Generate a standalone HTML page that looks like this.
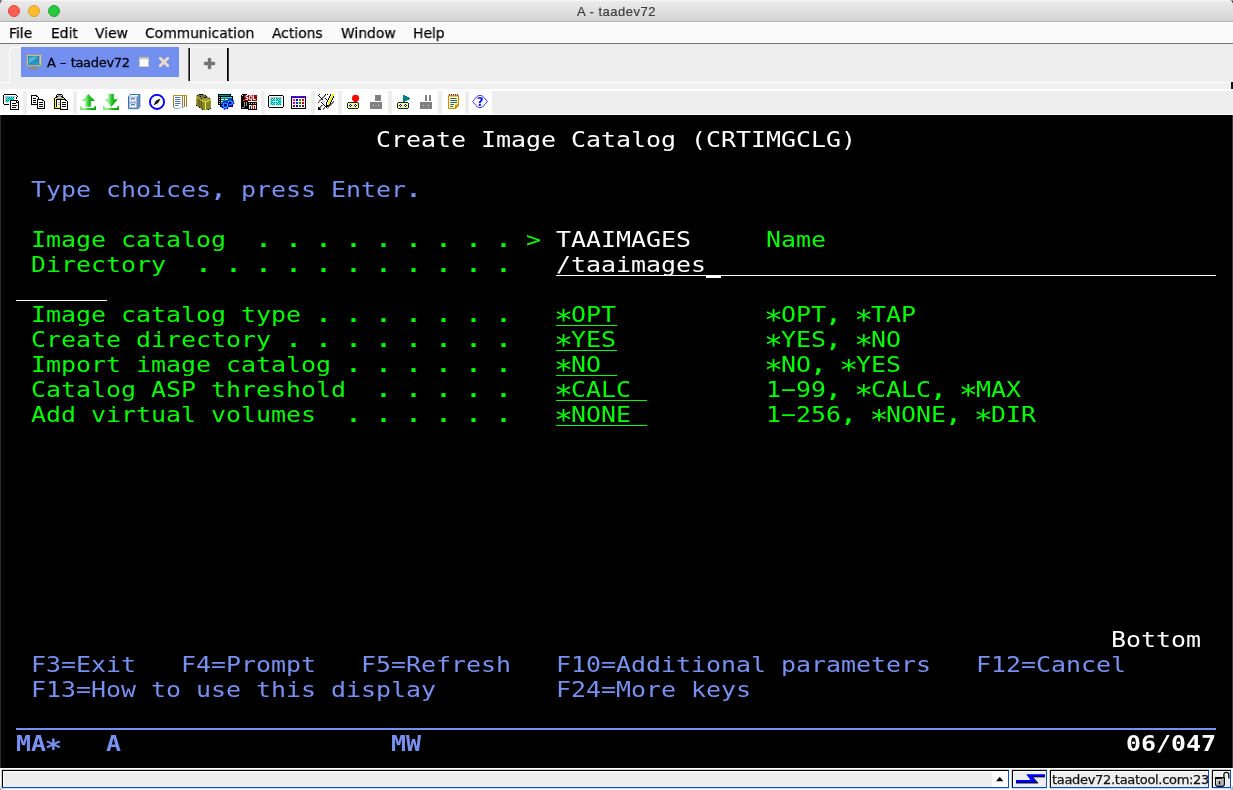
<!DOCTYPE html>
<html>
<head>
<meta charset="utf-8">
<title>A - taadev72</title>
<style>
html,body{margin:0;padding:0;}
body{width:1233px;height:790px;overflow:hidden;background:#fff;position:relative;font-family:"Liberation Sans","DejaVu Sans",sans-serif;}
.abs{position:absolute;}
.ic{position:absolute;display:block;}
#titlebar{left:0;top:0;width:1233px;height:21px;background:linear-gradient(#ececec,#d4d4d4);border-bottom:1px solid #b4b4b4;}
#titlebar .t{position:absolute;left:0;width:1233px;top:4px;text-align:center;font-size:13px;line-height:16px;color:#3c3c3c;letter-spacing:0.5px;-webkit-text-stroke:0.2px #3c3c3c;will-change:transform;}
.tl{position:absolute;top:5px;width:12px;height:12px;border-radius:50%;box-sizing:border-box;}
#menubar{left:0;top:22px;width:1233px;height:21px;background:#fafafa;border-bottom:1px solid #747474;}
#menubar span{position:absolute;top:1.6px;font-size:14.8px;line-height:18px;color:#000;-webkit-text-stroke:0.25px #000;will-change:transform;transform-origin:0 0;transform:scaleX(0.937);font-family:"DejaVu Sans","Liberation Sans",sans-serif;white-space:pre;}
#tabarea{left:0;top:44px;width:1233px;height:71px;background:#eeeeee;}
#term{left:0;top:115px;width:1233px;height:653px;background:#000;}
.row{position:absolute;left:16px;height:25px;line-height:25px;font-family:"DejaVu Sans Mono","Liberation Mono",monospace;font-size:21.5px;white-space:pre;transform-origin:0 0;transform:scaleX(1.15883);will-change:transform;}
.oia{font-weight:bold}
.row b{font-weight:bold}
.row .as{display:inline-block;font-weight:normal;transform:scale(1.27);transform-origin:50% 51.6%}
.oia .as{font-weight:bold;transform:scale(1.15)}
.g{color:#00ff00}.b{color:#7890f0}.w{color:#ffffff}
.ul{position:absolute;height:1px;}
#status{left:0;top:768px;width:1233px;height:22px;background:#fff;}
.sbox{position:absolute;top:2px;height:18px;box-sizing:border-box;background:#eeeeee;border-top:1px solid #000;border-left:1px solid #000;border-bottom:1px solid #0c4cdc;border-right:1px solid #0c4cdc;box-shadow:inset 1px 1px 0 #fff,0 -1px 0 rgba(0,0,0,0.2),-1px 0 0 rgba(0,0,0,0.2),0 1px 0 rgba(12,76,220,0.2);}
</style>
</head>
<body>
<!-- title bar -->
<div id="titlebar" class="abs">
  <div class="tl" style="left:8px;background:#fe5f57;border:0.5px solid #e2463f;"></div>
  <div class="tl" style="left:28px;background:#febc2e;border:0.5px solid #e0a028;"></div>
  <div class="tl" style="left:48px;background:#28c840;border:0.5px solid #1fa92f;"></div>
  <div class="t">A - taadev72</div>
</div>
<!-- menu bar -->
<div id="menubar" class="abs">
  <span style="left:9px">File</span>
  <span style="left:51px">Edit</span>
  <span style="left:95px">View</span>
  <span style="left:145px">Communication</span>
  <span style="left:272px">Actions</span>
  <span style="left:341px">Window</span>
  <span style="left:413px">Help</span>
</div>
<!-- tab area + toolbar -->
<div id="tabarea" class="abs">
<div class="abs" style="left:0;top:38px;width:10px;height:1px;background:#fff"></div>
<div class="abs" style="left:9px;top:3px;width:13px;height:36px;border-left:1px solid #fff;border-top:1px solid #fff;border-top-left-radius:4px;box-sizing:border-box"></div>
<div class="abs" style="left:190px;top:38px;width:1043px;height:1px;background:#fff"></div>
<div class="abs" style="left:1px;top:39px;width:1232px;height:6px;background:#f0f0f0"></div>
<div class="abs" style="left:1231px;top:38px;width:2px;height:7px;background:#111"></div>
<div class="abs" style="left:21px;top:3px;width:158px;height:30px;background:#7390f0"></div>
<div class="abs" style="left:188px;top:4px;width:2px;height:33px;background:linear-gradient(90deg,#666 50%,#111 50%)"></div>
<div class="abs" style="left:190px;top:3px;width:38px;height:1px;background:#f8f8f8"></div>
<div class="abs" style="left:190px;top:4px;width:1px;height:34px;background:#fafafa"></div>
<div class="abs" style="left:227px;top:4px;width:2px;height:33px;background:linear-gradient(90deg,#000 50%,#3a3a3a 50%)"></div>
<svg class="abs" style="left:203px;top:13px" width="13" height="13" viewBox="0 0 13 13"><path d="M5 1.2h3v3.8h3.8v3h-3.8v3.8h-3v-3.8h-3.8v-3h3.8z" fill="#767676" stroke="#606060" stroke-width="0.35"/></svg>
<svg class="abs" style="left:26px;top:10px" width="16" height="16" viewBox="0 0 16 16">
<defs><linearGradient id="scr" x1="0" y1="0" x2="1" y2="1"><stop offset="0" stop-color="#2a9cc8"/><stop offset="0.45" stop-color="#58bede"/><stop offset="0.5" stop-color="#1f8fbf"/><stop offset="1" stop-color="#2aa0cc"/></linearGradient></defs>
<rect x="0.5" y="0.5" width="15" height="11.5" rx="1" fill="#c9c6ba" stroke="#9a988e" stroke-width="1"/>
<rect x="2.2" y="2.2" width="10.8" height="8.2" fill="url(#scr)" stroke="#1c6f98" stroke-width="0.6"/>
<rect x="13.2" y="10" width="1.3" height="1.3" fill="#20e020"/>
<rect x="6" y="12" width="3.2" height="2" fill="#8f8f8a"/>
<rect x="2.2" y="13.8" width="11.2" height="1.7" rx="0.8" fill="#8a8a86"/>
</svg>
<div class="abs" style="left:47px;top:10px;font-family:'DejaVu Sans','Liberation Sans',sans-serif;font-size:13px;line-height:18px;letter-spacing:-0.3px;word-spacing:0.6px;color:#000010;-webkit-text-stroke:0.3px #000010;will-change:transform;white-space:pre">A – taadev72</div>
<svg class="abs" style="left:139px;top:13px" width="10" height="10" viewBox="0 0 10 10"><rect x="0.5" y="0.5" width="9" height="9" fill="#fff" stroke="#cfc8b4" stroke-width="1"/><rect x="0" y="0" width="10" height="2.2" fill="#c9c0a8"/></svg>
<svg class="abs" style="left:159px;top:13px" width="10" height="10" viewBox="0 0 10 10"><path d="M1.2 1.2L8.8 8.8M8.8 1.2L1.2 8.8" stroke="#c9bca8" stroke-width="3.2" stroke-linecap="square"/><path d="M1.2 1.2L8.8 8.8M8.8 1.2L1.2 8.8" stroke="#eadcd8" stroke-width="2.2" stroke-linecap="square"/></svg>
<div id="toolbar" class="abs" style="left:0;top:45px;width:1233px;height:26px;background:#fff"></div>
<div class="abs" style="left:492px;top:47px;width:741px;height:23px;background:#eeeeee"></div>
<div class="abs" style="left:23px;top:47px;width:4px;height:23px;background:#eeeeee"></div>
<div class="abs" style="left:73px;top:47px;width:4px;height:23px;background:#eeeeee"></div>
<div class="abs" style="left:261px;top:47px;width:4px;height:23px;background:#eeeeee"></div>
<div class="abs" style="left:311px;top:47px;width:4px;height:23px;background:#eeeeee"></div>
<div class="abs" style="left:338px;top:47px;width:4px;height:23px;background:#eeeeee"></div>
<div class="abs" style="left:388px;top:47px;width:4px;height:23px;background:#eeeeee"></div>
<div class="abs" style="left:438px;top:47px;width:4px;height:23px;background:#eeeeee"></div>
<div class="abs" style="left:465px;top:47px;width:4px;height:23px;background:#eeeeee"></div>
<svg class="ic" style="left:3px;top:50px" width="16" height="16" viewBox="0 0 16 16" shape-rendering="crispEdges"><rect x="1" y="0" width="12" height="1" fill="#000000"/><rect x="0" y="1" width="1" height="1" fill="#000000"/><rect x="13" y="1" width="1" height="1" fill="#000000"/><rect x="0" y="2" width="1" height="1" fill="#000000"/><rect x="2" y="2" width="10" height="1" fill="#c4c0c0"/><rect x="12" y="2" width="1" height="1" fill="#e0dede"/><rect x="14" y="2" width="1" height="1" fill="#000000"/><rect x="0" y="3" width="1" height="1" fill="#000000"/><rect x="2" y="3" width="1" height="1" fill="#c4c0c0"/><rect x="3" y="3" width="1" height="1" fill="#00ffff"/><rect x="4" y="3" width="1" height="1" fill="#009494"/><rect x="5" y="3" width="1" height="1" fill="#00ffff"/><rect x="6" y="3" width="1" height="1" fill="#009494"/><rect x="7" y="3" width="1" height="1" fill="#00ffff"/><rect x="8" y="3" width="1" height="1" fill="#009494"/><rect x="9" y="3" width="1" height="1" fill="#00ffff"/><rect x="10" y="3" width="1" height="1" fill="#009494"/><rect x="11" y="3" width="1" height="1" fill="#e0dede"/><rect x="13" y="3" width="1" height="1" fill="#000000"/><rect x="0" y="4" width="1" height="1" fill="#000000"/><rect x="2" y="4" width="1" height="1" fill="#c4c0c0"/><rect x="3" y="4" width="1" height="1" fill="#009494"/><rect x="4" y="4" width="1" height="1" fill="#ffffff"/><rect x="5" y="4" width="1" height="1" fill="#009494"/><rect x="6" y="4" width="1" height="1" fill="#00ffff"/><rect x="7" y="4" width="1" height="1" fill="#009494"/><rect x="8" y="4" width="1" height="1" fill="#00ffff"/><rect x="9" y="4" width="1" height="1" fill="#009494"/><rect x="10" y="4" width="1" height="1" fill="#00ffff"/><rect x="11" y="4" width="1" height="1" fill="#e0dede"/><rect x="13" y="4" width="1" height="1" fill="#000000"/><rect x="0" y="5" width="1" height="1" fill="#000000"/><rect x="2" y="5" width="1" height="1" fill="#c4c0c0"/><rect x="3" y="5" width="1" height="1" fill="#00ffff"/><rect x="4" y="5" width="1" height="1" fill="#009494"/><rect x="5" y="5" width="1" height="1" fill="#00ffff"/><rect x="6" y="5" width="1" height="1" fill="#009494"/><rect x="7" y="5" width="1" height="1" fill="#00ffff"/><rect x="8" y="5" width="1" height="1" fill="#009494"/><rect x="9" y="5" width="1" height="1" fill="#00ffff"/><rect x="10" y="5" width="1" height="1" fill="#009494"/><rect x="11" y="5" width="1" height="1" fill="#e0dede"/><rect x="0" y="6" width="1" height="1" fill="#000000"/><rect x="2" y="6" width="1" height="1" fill="#c4c0c0"/><rect x="3" y="6" width="1" height="1" fill="#009494"/><rect x="4" y="6" width="1" height="1" fill="#00ffff"/><rect x="5" y="6" width="1" height="1" fill="#009494"/><rect x="7" y="6" width="8" height="1" fill="#000000"/><rect x="0" y="7" width="1" height="1" fill="#000000"/><rect x="2" y="7" width="1" height="1" fill="#c4c0c0"/><rect x="3" y="7" width="1" height="1" fill="#00ffff"/><rect x="4" y="7" width="1" height="1" fill="#009494"/><rect x="5" y="7" width="1" height="1" fill="#00ffff"/><rect x="7" y="7" width="1" height="1" fill="#000000"/><rect x="8" y="7" width="5" height="1" fill="#ffffff"/><rect x="13" y="7" width="1" height="1" fill="#000000"/><rect x="14" y="7" width="1" height="1" fill="#ffffff"/><rect x="15" y="7" width="1" height="1" fill="#000000"/><rect x="0" y="8" width="1" height="1" fill="#000000"/><rect x="2" y="8" width="4" height="1" fill="#e0dede"/><rect x="7" y="8" width="1" height="1" fill="#000000"/><rect x="8" y="8" width="5" height="1" fill="#ffffff"/><rect x="13" y="8" width="3" height="1" fill="#000000"/><rect x="0" y="9" width="1" height="1" fill="#000000"/><rect x="7" y="9" width="1" height="1" fill="#000000"/><rect x="8" y="9" width="1" height="1" fill="#ffffff"/><rect x="9" y="9" width="4" height="1" fill="#000000"/><rect x="13" y="9" width="2" height="1" fill="#ffffff"/><rect x="15" y="9" width="1" height="1" fill="#000000"/><rect x="1" y="10" width="5" height="1" fill="#000000"/><rect x="7" y="10" width="1" height="1" fill="#000000"/><rect x="8" y="10" width="7" height="1" fill="#ffffff"/><rect x="15" y="10" width="1" height="1" fill="#000000"/><rect x="7" y="11" width="1" height="1" fill="#000000"/><rect x="8" y="11" width="1" height="1" fill="#ffffff"/><rect x="9" y="11" width="5" height="1" fill="#000000"/><rect x="14" y="11" width="1" height="1" fill="#ffffff"/><rect x="15" y="11" width="1" height="1" fill="#000000"/><rect x="7" y="12" width="1" height="1" fill="#000000"/><rect x="8" y="12" width="7" height="1" fill="#ffffff"/><rect x="15" y="12" width="1" height="1" fill="#000000"/><rect x="7" y="13" width="1" height="1" fill="#000000"/><rect x="8" y="13" width="1" height="1" fill="#ffffff"/><rect x="9" y="13" width="4" height="1" fill="#000000"/><rect x="13" y="13" width="2" height="1" fill="#ffffff"/><rect x="15" y="13" width="1" height="1" fill="#000000"/><rect x="7" y="14" width="1" height="1" fill="#000000"/><rect x="8" y="14" width="7" height="1" fill="#ffffff"/><rect x="15" y="14" width="1" height="1" fill="#000000"/><rect x="7" y="15" width="9" height="1" fill="#000000"/></svg>
<svg class="ic" style="left:30px;top:50px" width="16" height="16" viewBox="0 0 16 16" shape-rendering="crispEdges"><rect x="1" y="1" width="6" height="1" fill="#000000"/><rect x="1" y="2" width="1" height="1" fill="#000000"/><rect x="2" y="2" width="4" height="1" fill="#ffffff"/><rect x="6" y="2" width="2" height="1" fill="#000000"/><rect x="1" y="3" width="1" height="1" fill="#000000"/><rect x="2" y="3" width="6" height="1" fill="#ffffff"/><rect x="8" y="3" width="1" height="1" fill="#000000"/><rect x="1" y="4" width="1" height="1" fill="#000000"/><rect x="2" y="4" width="1" height="1" fill="#ffffff"/><rect x="3" y="4" width="3" height="1" fill="#000000"/><rect x="6" y="4" width="2" height="1" fill="#ffffff"/><rect x="8" y="4" width="1" height="1" fill="#000000"/><rect x="1" y="5" width="1" height="1" fill="#000000"/><rect x="2" y="5" width="5" height="1" fill="#ffffff"/><rect x="7" y="5" width="6" height="1" fill="#000000"/><rect x="1" y="6" width="1" height="1" fill="#000000"/><rect x="2" y="6" width="1" height="1" fill="#ffffff"/><rect x="3" y="6" width="3" height="1" fill="#000000"/><rect x="6" y="6" width="1" height="1" fill="#ffffff"/><rect x="7" y="6" width="1" height="1" fill="#000000"/><rect x="8" y="6" width="4" height="1" fill="#ffffff"/><rect x="12" y="6" width="2" height="1" fill="#000000"/><rect x="1" y="7" width="1" height="1" fill="#000000"/><rect x="2" y="7" width="5" height="1" fill="#ffffff"/><rect x="7" y="7" width="1" height="1" fill="#000000"/><rect x="8" y="7" width="6" height="1" fill="#ffffff"/><rect x="14" y="7" width="1" height="1" fill="#000000"/><rect x="1" y="8" width="1" height="1" fill="#000000"/><rect x="2" y="8" width="1" height="1" fill="#ffffff"/><rect x="3" y="8" width="3" height="1" fill="#000000"/><rect x="6" y="8" width="1" height="1" fill="#ffffff"/><rect x="7" y="8" width="1" height="1" fill="#000000"/><rect x="8" y="8" width="1" height="1" fill="#ffffff"/><rect x="9" y="8" width="4" height="1" fill="#000000"/><rect x="13" y="8" width="1" height="1" fill="#ffffff"/><rect x="14" y="8" width="1" height="1" fill="#000000"/><rect x="1" y="9" width="1" height="1" fill="#000000"/><rect x="2" y="9" width="5" height="1" fill="#ffffff"/><rect x="7" y="9" width="1" height="1" fill="#000000"/><rect x="8" y="9" width="6" height="1" fill="#ffffff"/><rect x="14" y="9" width="1" height="1" fill="#000000"/><rect x="1" y="10" width="7" height="1" fill="#000000"/><rect x="8" y="10" width="1" height="1" fill="#ffffff"/><rect x="9" y="10" width="4" height="1" fill="#000000"/><rect x="13" y="10" width="1" height="1" fill="#ffffff"/><rect x="14" y="10" width="1" height="1" fill="#000000"/><rect x="7" y="11" width="1" height="1" fill="#000000"/><rect x="8" y="11" width="6" height="1" fill="#ffffff"/><rect x="14" y="11" width="1" height="1" fill="#000000"/><rect x="7" y="12" width="1" height="1" fill="#000000"/><rect x="8" y="12" width="1" height="1" fill="#ffffff"/><rect x="9" y="12" width="4" height="1" fill="#000000"/><rect x="13" y="12" width="1" height="1" fill="#ffffff"/><rect x="14" y="12" width="1" height="1" fill="#000000"/><rect x="7" y="13" width="1" height="1" fill="#000000"/><rect x="8" y="13" width="6" height="1" fill="#ffffff"/><rect x="14" y="13" width="1" height="1" fill="#000000"/><rect x="7" y="14" width="8" height="1" fill="#000000"/></svg>
<svg class="ic" style="left:53px;top:50px" width="16" height="16" viewBox="0 0 16 16" shape-rendering="crispEdges"><rect x="4" y="0" width="5" height="1" fill="#000000"/><rect x="3" y="1" width="1" height="1" fill="#000000"/><rect x="5" y="1" width="3" height="1" fill="#a0a0a0"/><rect x="9" y="1" width="1" height="1" fill="#000000"/><rect x="3" y="2" width="2" height="1" fill="#000000"/><rect x="5" y="2" width="3" height="1" fill="#a0a0a0"/><rect x="8" y="2" width="2" height="1" fill="#000000"/><rect x="2" y="3" width="2" height="1" fill="#000000"/><rect x="4" y="3" width="1" height="1" fill="#a0a0a0"/><rect x="5" y="3" width="3" height="1" fill="#e0dede"/><rect x="8" y="3" width="1" height="1" fill="#a0a0a0"/><rect x="9" y="3" width="2" height="1" fill="#000000"/><rect x="1" y="4" width="1" height="1" fill="#000000"/><rect x="2" y="4" width="2" height="1" fill="#ffff00"/><rect x="4" y="4" width="5" height="1" fill="#a0a0a0"/><rect x="9" y="4" width="2" height="1" fill="#ffff00"/><rect x="11" y="4" width="1" height="1" fill="#000000"/><rect x="1" y="5" width="1" height="1" fill="#000000"/><rect x="2" y="5" width="1" height="1" fill="#ffff00"/><rect x="3" y="5" width="10" height="1" fill="#000000"/><rect x="1" y="6" width="1" height="1" fill="#000000"/><rect x="2" y="6" width="1" height="1" fill="#ffff00"/><rect x="3" y="6" width="1" height="1" fill="#000000"/><rect x="4" y="6" width="3" height="1" fill="#ffffff"/><rect x="7" y="6" width="1" height="1" fill="#000000"/><rect x="8" y="6" width="4" height="1" fill="#ffffff"/><rect x="12" y="6" width="2" height="1" fill="#000000"/><rect x="1" y="7" width="1" height="1" fill="#000000"/><rect x="2" y="7" width="1" height="1" fill="#ffff00"/><rect x="3" y="7" width="1" height="1" fill="#000000"/><rect x="4" y="7" width="3" height="1" fill="#ffffff"/><rect x="7" y="7" width="1" height="1" fill="#000000"/><rect x="8" y="7" width="6" height="1" fill="#ffffff"/><rect x="14" y="7" width="1" height="1" fill="#000000"/><rect x="1" y="8" width="1" height="1" fill="#000000"/><rect x="2" y="8" width="1" height="1" fill="#ffff00"/><rect x="3" y="8" width="1" height="1" fill="#000000"/><rect x="4" y="8" width="1" height="1" fill="#ffffff"/><rect x="5" y="8" width="2" height="1" fill="#a0a0a0"/><rect x="7" y="8" width="1" height="1" fill="#000000"/><rect x="8" y="8" width="1" height="1" fill="#ffffff"/><rect x="9" y="8" width="4" height="1" fill="#000000"/><rect x="13" y="8" width="1" height="1" fill="#ffffff"/><rect x="14" y="8" width="1" height="1" fill="#000000"/><rect x="1" y="9" width="1" height="1" fill="#000000"/><rect x="2" y="9" width="1" height="1" fill="#ffff00"/><rect x="3" y="9" width="1" height="1" fill="#000000"/><rect x="4" y="9" width="3" height="1" fill="#ffffff"/><rect x="7" y="9" width="1" height="1" fill="#000000"/><rect x="8" y="9" width="6" height="1" fill="#ffffff"/><rect x="14" y="9" width="1" height="1" fill="#000000"/><rect x="1" y="10" width="1" height="1" fill="#000000"/><rect x="2" y="10" width="1" height="1" fill="#ffff00"/><rect x="3" y="10" width="1" height="1" fill="#000000"/><rect x="4" y="10" width="1" height="1" fill="#ffffff"/><rect x="5" y="10" width="2" height="1" fill="#a0a0a0"/><rect x="7" y="10" width="1" height="1" fill="#000000"/><rect x="8" y="10" width="1" height="1" fill="#ffffff"/><rect x="9" y="10" width="4" height="1" fill="#000000"/><rect x="13" y="10" width="1" height="1" fill="#ffffff"/><rect x="14" y="10" width="1" height="1" fill="#000000"/><rect x="1" y="11" width="1" height="1" fill="#000000"/><rect x="2" y="11" width="1" height="1" fill="#ffff00"/><rect x="3" y="11" width="1" height="1" fill="#000000"/><rect x="4" y="11" width="3" height="1" fill="#ffffff"/><rect x="7" y="11" width="1" height="1" fill="#000000"/><rect x="8" y="11" width="6" height="1" fill="#ffffff"/><rect x="14" y="11" width="1" height="1" fill="#000000"/><rect x="1" y="12" width="1" height="1" fill="#000000"/><rect x="2" y="12" width="1" height="1" fill="#ffff00"/><rect x="3" y="12" width="1" height="1" fill="#000000"/><rect x="4" y="12" width="3" height="1" fill="#ffffff"/><rect x="7" y="12" width="1" height="1" fill="#000000"/><rect x="8" y="12" width="1" height="1" fill="#ffffff"/><rect x="9" y="12" width="4" height="1" fill="#000000"/><rect x="13" y="12" width="1" height="1" fill="#ffffff"/><rect x="14" y="12" width="1" height="1" fill="#000000"/><rect x="1" y="13" width="1" height="1" fill="#000000"/><rect x="2" y="13" width="5" height="1" fill="#ffff00"/><rect x="7" y="13" width="1" height="1" fill="#000000"/><rect x="8" y="13" width="6" height="1" fill="#ffffff"/><rect x="14" y="13" width="1" height="1" fill="#000000"/><rect x="1" y="14" width="7" height="1" fill="#000000"/><rect x="8" y="14" width="6" height="1" fill="#ffffff"/><rect x="14" y="14" width="1" height="1" fill="#000000"/><rect x="7" y="15" width="8" height="1" fill="#000000"/></svg>
<svg class="ic" style="left:80px;top:50px" width="16" height="16" viewBox="0 0 16 16"><defs><linearGradient id="gg" x1="0" y1="0" x2="1" y2="0"><stop offset="0.05" stop-color="#7fe87f"/><stop offset="0.3" stop-color="#8ff08f"/><stop offset="0.55" stop-color="#22c022"/><stop offset="1" stop-color="#00a000"/></linearGradient></defs><path d="M8.3 0.1L15 6.9H10.9V12.8H5.2V6.9H1.8Z" fill="url(#gg)"/><path d="M0 12.3h1.7v1.7h12.6v-1.7h1.7v3.7h-16z" fill="url(#gg)"/></svg>
<svg class="ic" style="left:103px;top:50px" width="16" height="16" viewBox="0 0 16 16"><path d="M5.4 0.1H10.9V5.2H14.8L8.4 13L2 5.2H5.4Z" fill="url(#gg)"/><path d="M0 12.3h1.7v1.7h12.6v-1.7h1.7v3.7h-16z" fill="url(#gg)"/></svg>
<svg class="ic" style="left:126px;top:50px" width="16" height="16" viewBox="0 0 16 16">
<path d="M2.5 2.5L4.3 0.5H13.7V12.7L11.8 14.7H2.5Z" fill="#aeb6df" stroke="#2b78ab" stroke-width="1" stroke-linejoin="round"/>
<path d="M4.3 1H13.2L11.8 2.5H3Z" fill="#fff"/>
<path d="M11.8 2.5L13.7 0.5V12.7L11.8 14.7Z" fill="#8c98cc" stroke="#2b78ab" stroke-width="0.8"/>
<rect x="3.6" y="3.3" width="6.6" height="4.3" fill="#fff" stroke="#8fa0d8" stroke-width="0.5"/>
<rect x="3.6" y="9.2" width="6.6" height="4.3" fill="#fff" stroke="#8fa0d8" stroke-width="0.5"/>
<path d="M5.4 5.8V4.7H8.4V5.8" fill="none" stroke="#2f58c0" stroke-width="1"/>
<path d="M5.4 11.7V10.6H8.4V11.7" fill="none" stroke="#2f58c0" stroke-width="1"/>
</svg>
<svg class="ic" style="left:149px;top:50px" width="16" height="16" viewBox="0 0 16 16"><circle cx="8" cy="7.9" r="7.05" fill="#fff" stroke="#0000ff" stroke-width="1.85"/><path d="M11.5 4.6L9.2 9.1L4.6 11.2L6.8 6.7Z" fill="#000"/><circle cx="8" cy="7.9" r="0.9" fill="#333"/></svg>
<svg class="ic" style="left:172px;top:50px" width="16" height="16" viewBox="0 0 16 16">
<defs><linearGradient id="tan" x1="0" y1="0" x2="0" y2="1"><stop offset="0" stop-color="#c08820"/><stop offset="1" stop-color="#7c6a30"/></linearGradient></defs>
<path d="M1.5 12.8V1.5H14.5V12.8" fill="#fff" stroke="url(#tan)" stroke-width="1"/>
<path d="M10.5 1.5V12.5M12.5 1.5V12.8" stroke="url(#tan)" stroke-width="1" fill="none"/>
<path d="M1.5 12.5Q1.8 14 3.2 14.2" stroke="#7c6a30" stroke-width="1" fill="none"/>
<path d="M3 3.5H8.5M3 5.5H8.5M3 7.5H8.5M3 9.5H8.5M3 11.5H6.5" stroke="#4a74c0" stroke-width="1"/>
<path d="M3.2 14.5H7L9 12.5L11 14L12 12.6" stroke="#8fb0e0" stroke-width="1" fill="none"/>
</svg>
<svg class="ic" style="left:195px;top:50px" width="16" height="16" viewBox="0 0 16 16">
<path d="M1 2.2L2.2 1L4 0.3H8.2L10.5 1.2L12 2.5L14.5 4L16 5.2V14.5L15 15.5L13.5 15.9H7.5L5 14L3.5 13L1 11.6Z" fill="#84842e"/>
<path d="M2.4 1.2L4 0.6H8.2L10.4 1.4L12 2.8L13.8 4.2L11 4L7.5 4.6L5.5 3.2Z" fill="#7a7a28"/>
<ellipse cx="11" cy="5.7" rx="4.5" ry="1.7" fill="#9c9c4c"/>
<path d="M4 3V13M6.3 4.6V14.6" stroke="#4e4e12" stroke-width="0.9"/>
<path d="M2.2 3L6.6 5.9" stroke="#d6d69c" stroke-width="0.8"/>
<path d="M1.45 2.2V5.8" stroke="#e4e420" stroke-width="0.9"/><path d="M1.45 5.8V11.4" stroke="#a0a028" stroke-width="0.9"/>
<path d="M6 6.2Q8.2 7.7 10.4 7.9Q13.2 7.6 15.8 5.3" fill="none" stroke="#e8e820" stroke-width="1"/>
<path d="M10.45 7.9V15.8" stroke="#ecec20" stroke-width="1.15"/>
<path d="M15.6 5.6V14.6" stroke="#a8a820" stroke-width="0.8"/>
<path d="M4 0.5H8.3" stroke="#000" stroke-width="1"/>
<g shape-rendering="crispEdges"><rect x="2" y="1" width="1" height="1" fill="#000"/><rect x="10" y="1" width="1" height="1" fill="#000"/><rect x="5" y="2" width="1" height="1" fill="#000"/><rect x="11" y="2" width="1" height="1" fill="#000"/><rect x="9" y="3" width="1" height="1" fill="#000"/><rect x="10" y="3" width="1" height="1" fill="#000"/><rect x="6" y="4" width="1" height="1" fill="#000"/><rect x="14" y="4" width="1" height="1" fill="#000"/><rect x="7" y="15" width="1" height="1" fill="#000"/><rect x="13" y="15" width="1" height="1" fill="#000"/><rect x="15" y="14" width="1" height="1" fill="#000"/><rect x="4" y="13" width="1" height="1" fill="#000"/><rect x="1" y="11" width="1" height="1" fill="#000"/></g>
</svg>
<svg class="ic" style="left:218px;top:50px" width="17" height="16" viewBox="0 0 17 16">
<g shape-rendering="crispEdges"><rect x="0" y="0" width="13" height="11" fill="#000"/><rect x="1" y="1" width="11" height="1" fill="#009090"/>
<rect x="1" y="3" width="1" height="1" fill="#d0d0d0"/><rect x="1" y="5" width="1" height="1" fill="#d0d0d0"/><rect x="1" y="7" width="1" height="1" fill="#d0d0d0"/><rect x="1" y="9" width="1" height="1" fill="#d0d0d0"/>
<rect x="2" y="2" width="13" height="11" fill="#000"/><rect x="3" y="3" width="11" height="1" fill="#00e4e4"/><rect x="3" y="4" width="11" height="8" fill="#007878"/>
<rect x="3" y="5" width="3" height="1" fill="#fff"/><rect x="7" y="5" width="4" height="1" fill="#fff"/><rect x="13" y="5" width="1" height="1" fill="#fff"/><rect x="3" y="7" width="3" height="1" fill="#fff"/><rect x="3" y="9" width="1" height="1" fill="#fff"/></g>
<g><circle cx="12.3" cy="8.8" r="3.2" fill="#0000e4"/><circle cx="12.3" cy="8.8" r="3.4" fill="none" stroke="#0000e4" stroke-width="1.5" stroke-dasharray="1.33 1.33"/>
<circle cx="12.3" cy="8.8" r="2" fill="#0000c8" stroke="#38f0f8" stroke-width="1.15" stroke-dasharray="1.2 0.37"/><circle cx="12.3" cy="8.8" r="0.9" fill="#000090"/>
<circle cx="7.4" cy="11.3" r="3.5" fill="#0000e4"/><circle cx="7.4" cy="11.3" r="3.7" fill="none" stroke="#0000e4" stroke-width="1.6" stroke-dasharray="1.45 1.45"/>
<circle cx="7.4" cy="11.3" r="2.3" fill="#0000c8" stroke="#38f0f8" stroke-width="1.2" stroke-dasharray="1.35 0.45"/><circle cx="7.4" cy="11.3" r="1.1" fill="#000088"/></g>
</svg>
<svg class="ic" style="left:241px;top:50px;will-change:transform" width="16" height="16" viewBox="0 0 16 16">
<g shape-rendering="crispEdges"><rect x="0" y="1" width="7" height="14" fill="#000"/><rect x="1" y="0" width="5" height="1" fill="#000"/><rect x="1" y="1" width="1" height="1" fill="#fff"/>
<rect x="2" y="6" width="1" height="1" fill="#ff8000"/><rect x="3" y="8" width="1" height="5" fill="#909090"/><rect x="5" y="8" width="1" height="4" fill="#909090"/><rect x="1" y="13" width="2" height="1" fill="#909090"/>
<rect x="3" y="1" width="13" height="6" fill="#900000"/>
<rect x="7" y="8" width="9" height="8" fill="#000"/><rect x="8" y="9" width="7" height="1" fill="#000"/>
<rect x="8" y="9" width="1" height="1" fill="#c8c8c8"/><rect x="10" y="9" width="1" height="1" fill="#c8c8c8"/><rect x="12" y="9" width="1" height="1" fill="#c8c8c8"/><rect x="14" y="9" width="1" height="1" fill="#c8c8c8"/>
<rect x="8" y="11" width="7" height="4" fill="#f8f098"/><rect x="9" y="12" width="1" height="3" fill="#0000ff"/><rect x="11" y="11" width="1" height="4" fill="#ff0000"/><rect x="13" y="12" width="1" height="3" fill="#800080"/></g>
<text x="9.55" y="6.05" font-family="'DejaVu Sans','Liberation Sans',sans-serif" font-weight="bold" font-size="6.6" fill="#fff" text-anchor="middle" textLength="10.4" lengthAdjust="spacingAndGlyphs">SQL</text>
</svg>
<svg class="ic" style="left:268px;top:51px" width="16" height="13" viewBox="0 0 16 13" shape-rendering="crispEdges"><rect x="1" y="0" width="14" height="1" fill="#000000"/><rect x="0" y="1" width="1" height="1" fill="#000000"/><rect x="15" y="1" width="1" height="1" fill="#000000"/><rect x="0" y="2" width="1" height="1" fill="#000000"/><rect x="2" y="2" width="11" height="1" fill="#c4c0c0"/><rect x="13" y="2" width="1" height="1" fill="#e0dede"/><rect x="15" y="2" width="1" height="1" fill="#000000"/><rect x="0" y="3" width="1" height="1" fill="#000000"/><rect x="2" y="3" width="1" height="1" fill="#c4c0c0"/><rect x="3" y="3" width="1" height="1" fill="#00ffff"/><rect x="4" y="3" width="1" height="1" fill="#009494"/><rect x="5" y="3" width="1" height="1" fill="#00ffff"/><rect x="6" y="3" width="1" height="1" fill="#009494"/><rect x="7" y="3" width="1" height="1" fill="#ffffff"/><rect x="8" y="3" width="1" height="1" fill="#009494"/><rect x="9" y="3" width="1" height="1" fill="#00ffff"/><rect x="10" y="3" width="1" height="1" fill="#009494"/><rect x="11" y="3" width="1" height="1" fill="#00ffff"/><rect x="12" y="3" width="1" height="1" fill="#009494"/><rect x="13" y="3" width="1" height="1" fill="#e0dede"/><rect x="15" y="3" width="1" height="1" fill="#000000"/><rect x="0" y="4" width="1" height="1" fill="#000000"/><rect x="2" y="4" width="1" height="1" fill="#c4c0c0"/><rect x="3" y="4" width="1" height="1" fill="#009494"/><rect x="4" y="4" width="1" height="1" fill="#ffffff"/><rect x="5" y="4" width="1" height="1" fill="#009494"/><rect x="6" y="4" width="1" height="1" fill="#00ffff"/><rect x="7" y="4" width="1" height="1" fill="#ffffff"/><rect x="8" y="4" width="1" height="1" fill="#00ffff"/><rect x="9" y="4" width="1" height="1" fill="#009494"/><rect x="10" y="4" width="1" height="1" fill="#ffffff"/><rect x="11" y="4" width="1" height="1" fill="#009494"/><rect x="12" y="4" width="1" height="1" fill="#00ffff"/><rect x="13" y="4" width="1" height="1" fill="#e0dede"/><rect x="15" y="4" width="1" height="1" fill="#000000"/><rect x="0" y="5" width="1" height="1" fill="#000000"/><rect x="2" y="5" width="1" height="1" fill="#c4c0c0"/><rect x="3" y="5" width="1" height="1" fill="#00ffff"/><rect x="4" y="5" width="1" height="1" fill="#009494"/><rect x="5" y="5" width="1" height="1" fill="#00ffff"/><rect x="6" y="5" width="1" height="1" fill="#009494"/><rect x="7" y="5" width="1" height="1" fill="#00ffff"/><rect x="8" y="5" width="1" height="1" fill="#009494"/><rect x="9" y="5" width="1" height="1" fill="#00ffff"/><rect x="10" y="5" width="1" height="1" fill="#009494"/><rect x="11" y="5" width="1" height="1" fill="#00ffff"/><rect x="12" y="5" width="1" height="1" fill="#009494"/><rect x="13" y="5" width="1" height="1" fill="#e0dede"/><rect x="15" y="5" width="1" height="1" fill="#000000"/><rect x="0" y="6" width="1" height="1" fill="#000000"/><rect x="2" y="6" width="1" height="1" fill="#c4c0c0"/><rect x="3" y="6" width="1" height="1" fill="#009494"/><rect x="4" y="6" width="1" height="1" fill="#00ffff"/><rect x="5" y="6" width="5" height="1" fill="#ffffff"/><rect x="10" y="6" width="1" height="1" fill="#00ffff"/><rect x="11" y="6" width="1" height="1" fill="#009494"/><rect x="12" y="6" width="1" height="1" fill="#00ffff"/><rect x="13" y="6" width="1" height="1" fill="#e0dede"/><rect x="15" y="6" width="1" height="1" fill="#000000"/><rect x="0" y="7" width="1" height="1" fill="#000000"/><rect x="2" y="7" width="1" height="1" fill="#c4c0c0"/><rect x="3" y="7" width="1" height="1" fill="#00ffff"/><rect x="4" y="7" width="1" height="1" fill="#009494"/><rect x="5" y="7" width="1" height="1" fill="#00ffff"/><rect x="6" y="7" width="1" height="1" fill="#009494"/><rect x="7" y="7" width="1" height="1" fill="#00ffff"/><rect x="8" y="7" width="1" height="1" fill="#009494"/><rect x="9" y="7" width="1" height="1" fill="#00ffff"/><rect x="10" y="7" width="1" height="1" fill="#009494"/><rect x="11" y="7" width="1" height="1" fill="#00ffff"/><rect x="12" y="7" width="1" height="1" fill="#009494"/><rect x="13" y="7" width="1" height="1" fill="#e0dede"/><rect x="15" y="7" width="1" height="1" fill="#000000"/><rect x="0" y="8" width="1" height="1" fill="#000000"/><rect x="2" y="8" width="1" height="1" fill="#c4c0c0"/><rect x="3" y="8" width="1" height="1" fill="#009494"/><rect x="4" y="8" width="1" height="1" fill="#ffffff"/><rect x="5" y="8" width="1" height="1" fill="#009494"/><rect x="6" y="8" width="1" height="1" fill="#00ffff"/><rect x="7" y="8" width="1" height="1" fill="#ffffff"/><rect x="8" y="8" width="1" height="1" fill="#00ffff"/><rect x="9" y="8" width="1" height="1" fill="#009494"/><rect x="10" y="8" width="1" height="1" fill="#ffffff"/><rect x="11" y="8" width="1" height="1" fill="#009494"/><rect x="12" y="8" width="1" height="1" fill="#00ffff"/><rect x="13" y="8" width="1" height="1" fill="#e0dede"/><rect x="15" y="8" width="1" height="1" fill="#000000"/><rect x="0" y="9" width="1" height="1" fill="#000000"/><rect x="2" y="9" width="1" height="1" fill="#c4c0c0"/><rect x="3" y="9" width="1" height="1" fill="#00ffff"/><rect x="4" y="9" width="1" height="1" fill="#009494"/><rect x="5" y="9" width="1" height="1" fill="#00ffff"/><rect x="6" y="9" width="1" height="1" fill="#009494"/><rect x="7" y="9" width="1" height="1" fill="#ffffff"/><rect x="8" y="9" width="1" height="1" fill="#009494"/><rect x="9" y="9" width="1" height="1" fill="#00ffff"/><rect x="10" y="9" width="1" height="1" fill="#009494"/><rect x="11" y="9" width="1" height="1" fill="#00ffff"/><rect x="12" y="9" width="1" height="1" fill="#009494"/><rect x="13" y="9" width="1" height="1" fill="#e0dede"/><rect x="15" y="9" width="1" height="1" fill="#000000"/><rect x="0" y="10" width="1" height="1" fill="#000000"/><rect x="2" y="10" width="12" height="1" fill="#e0dede"/><rect x="15" y="10" width="1" height="1" fill="#000000"/><rect x="0" y="11" width="1" height="1" fill="#000000"/><rect x="15" y="11" width="1" height="1" fill="#000000"/><rect x="1" y="12" width="14" height="1" fill="#000000"/></svg>
<svg class="ic" style="left:291px;top:52px" width="15" height="13" viewBox="0 0 15 13" shape-rendering="crispEdges"><rect x="0" y="0" width="1" height="1" fill="#0000ff"/><rect x="1" y="0" width="1" height="1" fill="#ff0000"/><rect x="2" y="0" width="1" height="1" fill="#0000ff"/><rect x="3" y="0" width="1" height="1" fill="#ff0000"/><rect x="4" y="0" width="1" height="1" fill="#0000ff"/><rect x="5" y="0" width="1" height="1" fill="#ff0000"/><rect x="6" y="0" width="1" height="1" fill="#0000ff"/><rect x="7" y="0" width="1" height="1" fill="#ff0000"/><rect x="8" y="0" width="1" height="1" fill="#0000ff"/><rect x="9" y="0" width="1" height="1" fill="#ff0000"/><rect x="10" y="0" width="1" height="1" fill="#0000ff"/><rect x="11" y="0" width="1" height="1" fill="#ff0000"/><rect x="12" y="0" width="1" height="1" fill="#0000ff"/><rect x="13" y="0" width="1" height="1" fill="#ff0000"/><rect x="14" y="0" width="1" height="1" fill="#0000ff"/><rect x="0" y="1" width="15" height="1" fill="#0000ff"/><rect x="0" y="2" width="1" height="1" fill="#000000"/><rect x="1" y="2" width="13" height="1" fill="#ffffff"/><rect x="14" y="2" width="1" height="1" fill="#000000"/><rect x="0" y="3" width="1" height="1" fill="#000000"/><rect x="1" y="3" width="1" height="1" fill="#ffffff"/><rect x="2" y="3" width="2" height="1" fill="#ff00ff"/><rect x="4" y="3" width="1" height="1" fill="#ffffff"/><rect x="5" y="3" width="2" height="1" fill="#0000ff"/><rect x="7" y="3" width="1" height="1" fill="#ffffff"/><rect x="8" y="3" width="2" height="1" fill="#808000"/><rect x="10" y="3" width="1" height="1" fill="#ffffff"/><rect x="11" y="3" width="2" height="1" fill="#ff0000"/><rect x="13" y="3" width="1" height="1" fill="#ffffff"/><rect x="14" y="3" width="1" height="1" fill="#000000"/><rect x="0" y="4" width="1" height="1" fill="#000000"/><rect x="1" y="4" width="1" height="1" fill="#ffffff"/><rect x="2" y="4" width="2" height="1" fill="#ff00ff"/><rect x="4" y="4" width="1" height="1" fill="#ffffff"/><rect x="5" y="4" width="2" height="1" fill="#0000ff"/><rect x="7" y="4" width="1" height="1" fill="#ffffff"/><rect x="8" y="4" width="2" height="1" fill="#808000"/><rect x="10" y="4" width="1" height="1" fill="#ffffff"/><rect x="11" y="4" width="2" height="1" fill="#ff0000"/><rect x="13" y="4" width="1" height="1" fill="#ffffff"/><rect x="14" y="4" width="1" height="1" fill="#000000"/><rect x="0" y="5" width="1" height="1" fill="#000000"/><rect x="1" y="5" width="13" height="1" fill="#ffffff"/><rect x="14" y="5" width="1" height="1" fill="#000000"/><rect x="0" y="6" width="1" height="1" fill="#000000"/><rect x="1" y="6" width="1" height="1" fill="#ffffff"/><rect x="2" y="6" width="1" height="1" fill="#ff00ff"/><rect x="3" y="6" width="1" height="1" fill="#800080"/><rect x="4" y="6" width="1" height="1" fill="#ffffff"/><rect x="5" y="6" width="1" height="1" fill="#0000ff"/><rect x="6" y="6" width="1" height="1" fill="#008000"/><rect x="7" y="6" width="1" height="1" fill="#ffffff"/><rect x="8" y="6" width="2" height="1" fill="#008000"/><rect x="10" y="6" width="1" height="1" fill="#ffffff"/><rect x="11" y="6" width="1" height="1" fill="#ff0000"/><rect x="12" y="6" width="1" height="1" fill="#900000"/><rect x="13" y="6" width="1" height="1" fill="#ffffff"/><rect x="14" y="6" width="1" height="1" fill="#000000"/><rect x="0" y="7" width="1" height="1" fill="#000000"/><rect x="1" y="7" width="1" height="1" fill="#ffffff"/><rect x="2" y="7" width="1" height="1" fill="#800080"/><rect x="3" y="7" width="1" height="1" fill="#ff00ff"/><rect x="4" y="7" width="1" height="1" fill="#ffffff"/><rect x="5" y="7" width="1" height="1" fill="#008000"/><rect x="6" y="7" width="1" height="1" fill="#0000ff"/><rect x="7" y="7" width="1" height="1" fill="#ffffff"/><rect x="8" y="7" width="2" height="1" fill="#008000"/><rect x="10" y="7" width="1" height="1" fill="#ffffff"/><rect x="11" y="7" width="1" height="1" fill="#900000"/><rect x="12" y="7" width="1" height="1" fill="#ff0000"/><rect x="13" y="7" width="1" height="1" fill="#ffffff"/><rect x="14" y="7" width="1" height="1" fill="#000000"/><rect x="0" y="8" width="1" height="1" fill="#000000"/><rect x="1" y="8" width="13" height="1" fill="#ffffff"/><rect x="14" y="8" width="1" height="1" fill="#000000"/><rect x="0" y="9" width="1" height="1" fill="#000000"/><rect x="1" y="9" width="1" height="1" fill="#ffffff"/><rect x="2" y="9" width="2" height="1" fill="#800080"/><rect x="4" y="9" width="1" height="1" fill="#ffffff"/><rect x="5" y="9" width="2" height="1" fill="#000080"/><rect x="7" y="9" width="1" height="1" fill="#ffffff"/><rect x="8" y="9" width="2" height="1" fill="#008080"/><rect x="10" y="9" width="1" height="1" fill="#ffffff"/><rect x="11" y="9" width="2" height="1" fill="#900000"/><rect x="13" y="9" width="1" height="1" fill="#ffffff"/><rect x="14" y="9" width="1" height="1" fill="#000000"/><rect x="0" y="10" width="1" height="1" fill="#000000"/><rect x="1" y="10" width="1" height="1" fill="#ffffff"/><rect x="2" y="10" width="2" height="1" fill="#800080"/><rect x="4" y="10" width="1" height="1" fill="#ffffff"/><rect x="5" y="10" width="2" height="1" fill="#000080"/><rect x="7" y="10" width="1" height="1" fill="#ffffff"/><rect x="8" y="10" width="2" height="1" fill="#008080"/><rect x="10" y="10" width="1" height="1" fill="#ffffff"/><rect x="11" y="10" width="2" height="1" fill="#900000"/><rect x="13" y="10" width="1" height="1" fill="#ffffff"/><rect x="14" y="10" width="1" height="1" fill="#000000"/><rect x="0" y="11" width="1" height="1" fill="#000000"/><rect x="1" y="11" width="13" height="1" fill="#ffffff"/><rect x="14" y="11" width="1" height="1" fill="#000000"/><rect x="0" y="12" width="15" height="1" fill="#000000"/></svg>
<svg class="ic" style="left:318px;top:50px" width="16" height="16" viewBox="0 0 16 16" shape-rendering="crispEdges"><rect x="1" y="0" width="1" height="1" fill="#000000"/><rect x="7" y="0" width="1" height="1" fill="#000000"/><rect x="9" y="0" width="1" height="1" fill="#000000"/><rect x="12" y="0" width="1" height="1" fill="#000000"/><rect x="14" y="0" width="2" height="1" fill="#ffff00"/><rect x="0" y="1" width="1" height="1" fill="#000000"/><rect x="6" y="1" width="1" height="1" fill="#585858"/><rect x="7" y="1" width="1" height="1" fill="#808080"/><rect x="12" y="1" width="1" height="1" fill="#000000"/><rect x="14" y="1" width="1" height="1" fill="#e8e800"/><rect x="15" y="1" width="1" height="1" fill="#ffff00"/><rect x="1" y="2" width="1" height="1" fill="#000000"/><rect x="5" y="2" width="1" height="1" fill="#808080"/><rect x="6" y="2" width="1" height="1" fill="#585858"/><rect x="11" y="2" width="1" height="1" fill="#000000"/><rect x="12" y="2" width="1" height="1" fill="#ffffff"/><rect x="13" y="2" width="2" height="1" fill="#ffff00"/><rect x="15" y="2" width="1" height="1" fill="#000000"/><rect x="2" y="3" width="1" height="1" fill="#000000"/><rect x="4" y="3" width="1" height="1" fill="#585858"/><rect x="5" y="3" width="1" height="1" fill="#808080"/><rect x="11" y="3" width="1" height="1" fill="#000000"/><rect x="12" y="3" width="1" height="1" fill="#ffffff"/><rect x="13" y="3" width="1" height="1" fill="#e8e800"/><rect x="14" y="3" width="1" height="1" fill="#ffff00"/><rect x="15" y="3" width="1" height="1" fill="#000000"/><rect x="3" y="4" width="1" height="1" fill="#000000"/><rect x="4" y="4" width="1" height="1" fill="#808080"/><rect x="7" y="4" width="1" height="1" fill="#000000"/><rect x="10" y="4" width="1" height="1" fill="#000000"/><rect x="11" y="4" width="1" height="1" fill="#ffffff"/><rect x="12" y="4" width="2" height="1" fill="#ffff00"/><rect x="14" y="4" width="1" height="1" fill="#000000"/><rect x="2" y="5" width="1" height="1" fill="#808080"/><rect x="3" y="5" width="1" height="1" fill="#585858"/><rect x="4" y="5" width="1" height="1" fill="#000000"/><rect x="8" y="5" width="1" height="1" fill="#000000"/><rect x="10" y="5" width="1" height="1" fill="#000000"/><rect x="11" y="5" width="1" height="1" fill="#ffffff"/><rect x="12" y="5" width="1" height="1" fill="#e8e800"/><rect x="13" y="5" width="1" height="1" fill="#ffff00"/><rect x="14" y="5" width="1" height="1" fill="#000000"/><rect x="1" y="6" width="1" height="1" fill="#585858"/><rect x="2" y="6" width="1" height="1" fill="#808080"/><rect x="5" y="6" width="1" height="1" fill="#e0dede"/><rect x="9" y="6" width="1" height="1" fill="#000000"/><rect x="10" y="6" width="1" height="1" fill="#ffffff"/><rect x="11" y="6" width="2" height="1" fill="#ffff00"/><rect x="13" y="6" width="1" height="1" fill="#000000"/><rect x="1" y="7" width="1" height="1" fill="#808080"/><rect x="4" y="7" width="3" height="1" fill="#e0dede"/><rect x="9" y="7" width="1" height="1" fill="#000000"/><rect x="10" y="7" width="1" height="1" fill="#ffffff"/><rect x="11" y="7" width="1" height="1" fill="#e8e800"/><rect x="12" y="7" width="1" height="1" fill="#ffff00"/><rect x="13" y="7" width="1" height="1" fill="#000000"/><rect x="15" y="7" width="1" height="1" fill="#585858"/><rect x="0" y="8" width="1" height="1" fill="#000000"/><rect x="3" y="8" width="1" height="1" fill="#000000"/><rect x="4" y="8" width="3" height="1" fill="#e0dede"/><rect x="8" y="8" width="1" height="1" fill="#000000"/><rect x="9" y="8" width="1" height="1" fill="#ffffff"/><rect x="10" y="8" width="2" height="1" fill="#ffff00"/><rect x="12" y="8" width="1" height="1" fill="#000000"/><rect x="14" y="8" width="1" height="1" fill="#585858"/><rect x="15" y="8" width="1" height="1" fill="#808080"/><rect x="4" y="9" width="1" height="1" fill="#000000"/><rect x="5" y="9" width="2" height="1" fill="#e0dede"/><rect x="8" y="9" width="1" height="1" fill="#000000"/><rect x="9" y="9" width="1" height="1" fill="#ffffff"/><rect x="10" y="9" width="1" height="1" fill="#e8e800"/><rect x="11" y="9" width="1" height="1" fill="#ffff00"/><rect x="12" y="9" width="1" height="1" fill="#000000"/><rect x="13" y="9" width="1" height="1" fill="#585858"/><rect x="14" y="9" width="1" height="1" fill="#808080"/><rect x="5" y="10" width="1" height="1" fill="#000000"/><rect x="6" y="10" width="1" height="1" fill="#e0dede"/><rect x="8" y="10" width="1" height="1" fill="#000000"/><rect x="10" y="10" width="1" height="1" fill="#ffffff"/><rect x="11" y="10" width="1" height="1" fill="#000000"/><rect x="12" y="10" width="1" height="1" fill="#585858"/><rect x="13" y="10" width="1" height="1" fill="#808080"/><rect x="3" y="11" width="1" height="1" fill="#585858"/><rect x="4" y="11" width="1" height="1" fill="#808080"/><rect x="6" y="11" width="1" height="1" fill="#000000"/><rect x="8" y="11" width="3" height="1" fill="#000000"/><rect x="11" y="11" width="1" height="1" fill="#585858"/><rect x="12" y="11" width="1" height="1" fill="#808080"/><rect x="2" y="12" width="1" height="1" fill="#585858"/><rect x="3" y="12" width="1" height="1" fill="#808080"/><rect x="7" y="12" width="3" height="1" fill="#000000"/><rect x="10" y="12" width="1" height="1" fill="#585858"/><rect x="11" y="12" width="1" height="1" fill="#808080"/><rect x="0" y="13" width="1" height="1" fill="#000000"/><rect x="1" y="13" width="1" height="1" fill="#585858"/><rect x="2" y="13" width="1" height="1" fill="#808080"/><rect x="6" y="13" width="1" height="1" fill="#585858"/><rect x="8" y="13" width="1" height="1" fill="#000000"/><rect x="10" y="13" width="1" height="1" fill="#808080"/><rect x="0" y="14" width="2" height="1" fill="#000000"/><rect x="2" y="14" width="1" height="1" fill="#808080"/><rect x="5" y="14" width="1" height="1" fill="#585858"/><rect x="6" y="14" width="1" height="1" fill="#808080"/><rect x="9" y="14" width="1" height="1" fill="#808080"/><rect x="0" y="15" width="3" height="1" fill="#000000"/><rect x="5" y="15" width="1" height="1" fill="#808080"/></svg>
<svg class="ic" style="left:345px;top:50px" width="16" height="15" viewBox="0 0 16 15" shape-rendering="crispEdges"><rect x="3" y="8" width="10" height="1" fill="#0c3020"/><rect x="2" y="9" width="1" height="1" fill="#0c3020"/><rect x="3" y="9" width="10" height="1" fill="#f4f4a4"/><rect x="13" y="9" width="1" height="1" fill="#0c3020"/><rect x="2" y="10" width="1" height="1" fill="#0c3020"/><rect x="3" y="10" width="2" height="1" fill="#f4f4a4"/><rect x="5" y="10" width="1" height="1" fill="#000080"/><rect x="6" y="10" width="4" height="1" fill="#f4f4a4"/><rect x="10" y="10" width="1" height="1" fill="#000080"/><rect x="11" y="10" width="2" height="1" fill="#f4f4a4"/><rect x="13" y="10" width="1" height="1" fill="#0c3020"/><rect x="2" y="11" width="1" height="1" fill="#0c3020"/><rect x="3" y="11" width="1" height="1" fill="#f4f4a4"/><rect x="4" y="11" width="1" height="1" fill="#000080"/><rect x="5" y="11" width="1" height="1" fill="#ffffff"/><rect x="6" y="11" width="1" height="1" fill="#000080"/><rect x="7" y="11" width="2" height="1" fill="#e8e8b4"/><rect x="9" y="11" width="1" height="1" fill="#000080"/><rect x="10" y="11" width="1" height="1" fill="#ffffff"/><rect x="11" y="11" width="1" height="1" fill="#000080"/><rect x="12" y="11" width="1" height="1" fill="#f4f4a4"/><rect x="13" y="11" width="1" height="1" fill="#0c3020"/><rect x="2" y="12" width="1" height="1" fill="#0c3020"/><rect x="3" y="12" width="2" height="1" fill="#f4f4a4"/><rect x="5" y="12" width="1" height="1" fill="#000080"/><rect x="6" y="12" width="4" height="1" fill="#f4f4a4"/><rect x="10" y="12" width="1" height="1" fill="#000080"/><rect x="11" y="12" width="2" height="1" fill="#f4f4a4"/><rect x="13" y="12" width="1" height="1" fill="#0c3020"/><rect x="2" y="13" width="1" height="1" fill="#0c3020"/><rect x="3" y="13" width="10" height="1" fill="#f4f4a4"/><rect x="13" y="13" width="1" height="1" fill="#0c3020"/><rect x="3" y="14" width="10" height="1" fill="#0c3020"/></svg>
<svg class="ic" style="left:345px;top:50px" width="16" height="16" viewBox="0 0 16 16"><circle cx="10.55" cy="4.35" r="3.55" fill="#ff0000"/><rect x="9.2" y="7" width="2.7" height="1.1" fill="#ff0000"/></svg>
<svg class="ic" style="left:368px;top:50px" width="16" height="16" viewBox="0 0 16 16" shape-rendering="crispEdges"><rect x="7" y="1" width="6" height="6" fill="#808080"/><rect x="2" y="8" width="12" height="7" fill="#808080"/><rect x="5" y="11" width="1" height="1" fill="#d0d0d0"/><rect x="10" y="11" width="1" height="1" fill="#d0d0d0"/></svg>
<svg class="ic" style="left:395px;top:50px" width="16" height="15" viewBox="0 0 16 15" shape-rendering="crispEdges"><rect x="8" y="1" width="2" height="1" fill="#008080"/><rect x="8" y="2" width="4" height="1" fill="#008080"/><rect x="8" y="3" width="6" height="1" fill="#008080"/><rect x="8" y="4" width="7" height="1" fill="#008080"/><rect x="8" y="5" width="6" height="1" fill="#008080"/><rect x="8" y="6" width="4" height="1" fill="#008080"/><rect x="8" y="7" width="2" height="1" fill="#008080"/><rect x="3" y="8" width="10" height="1" fill="#0c3020"/><rect x="2" y="9" width="1" height="1" fill="#0c3020"/><rect x="3" y="9" width="10" height="1" fill="#f4f4a4"/><rect x="13" y="9" width="1" height="1" fill="#0c3020"/><rect x="2" y="10" width="1" height="1" fill="#0c3020"/><rect x="3" y="10" width="2" height="1" fill="#f4f4a4"/><rect x="5" y="10" width="1" height="1" fill="#000080"/><rect x="6" y="10" width="4" height="1" fill="#f4f4a4"/><rect x="10" y="10" width="1" height="1" fill="#000080"/><rect x="11" y="10" width="2" height="1" fill="#f4f4a4"/><rect x="13" y="10" width="1" height="1" fill="#0c3020"/><rect x="2" y="11" width="1" height="1" fill="#0c3020"/><rect x="3" y="11" width="1" height="1" fill="#f4f4a4"/><rect x="4" y="11" width="1" height="1" fill="#000080"/><rect x="5" y="11" width="1" height="1" fill="#ffffff"/><rect x="6" y="11" width="1" height="1" fill="#000080"/><rect x="7" y="11" width="2" height="1" fill="#e8e8b4"/><rect x="9" y="11" width="1" height="1" fill="#000080"/><rect x="10" y="11" width="1" height="1" fill="#ffffff"/><rect x="11" y="11" width="1" height="1" fill="#000080"/><rect x="12" y="11" width="1" height="1" fill="#f4f4a4"/><rect x="13" y="11" width="1" height="1" fill="#0c3020"/><rect x="2" y="12" width="1" height="1" fill="#0c3020"/><rect x="3" y="12" width="2" height="1" fill="#f4f4a4"/><rect x="5" y="12" width="1" height="1" fill="#000080"/><rect x="6" y="12" width="4" height="1" fill="#f4f4a4"/><rect x="10" y="12" width="1" height="1" fill="#000080"/><rect x="11" y="12" width="2" height="1" fill="#f4f4a4"/><rect x="13" y="12" width="1" height="1" fill="#0c3020"/><rect x="2" y="13" width="1" height="1" fill="#0c3020"/><rect x="3" y="13" width="10" height="1" fill="#f4f4a4"/><rect x="13" y="13" width="1" height="1" fill="#0c3020"/><rect x="3" y="14" width="10" height="1" fill="#0c3020"/></svg>
<svg class="ic" style="left:418px;top:50px" width="16" height="16" viewBox="0 0 16 16" shape-rendering="crispEdges"><rect x="7" y="1" width="2" height="6" fill="#808080"/><rect x="11" y="1" width="2" height="6" fill="#808080"/><rect x="2" y="8" width="12" height="7" fill="#808080"/><rect x="5" y="11" width="1" height="1" fill="#d0d0d0"/><rect x="10" y="11" width="1" height="1" fill="#d0d0d0"/></svg>
<svg class="ic" style="left:445px;top:50px" width="16" height="16" viewBox="0 0 16 16">
<defs><linearGradient id="np" x1="0" y1="0" x2="1" y2="1"><stop offset="0" stop-color="#ffffd8"/><stop offset="0.6" stop-color="#ffff9c"/><stop offset="1" stop-color="#ffe000"/></linearGradient></defs>
<path d="M3.5 1.8H13.5V11L10.2 14.5H3.5Z" fill="url(#np)" stroke="#c88c14" stroke-width="1.1" stroke-linejoin="round"/>
<path d="M13.5 11H10.6V14.2Z" fill="#e8b020" stroke="#a87408" stroke-width="0.6"/>
<path d="M4.6 0V1.6M6.6 0V1.6M8.6 0V1.6M10.6 0V1.6M12.6 0V1.6" stroke="#501020" stroke-width="1"/>
<path d="M4.6 1.4V2.6M6.6 1.4V2.6M8.6 1.4V2.6M10.6 1.4V2.6M12.6 1.4V2.6" stroke="#c88c14" stroke-width="0.9"/>
<path d="M5.3 4.5H11.4M5.3 6.5H12M5.3 8.5H12M5.3 10.5H9M5.3 12.5H8" stroke="#3058a8" stroke-width="1"/>
</svg>
<svg class="ic" style="left:472px;top:50px" width="16" height="16" viewBox="0 0 16 16">
<path d="M0.6 7.5L5.6 1.9Q8 0.9 10.4 1.9L15.4 7.5L10.4 13.1Q8 14.1 5.6 13.1Z" fill="#fff" stroke="#3030ff" stroke-width="0.95" stroke-linejoin="round"/>
<text x="8" y="11.7" font-family="'DejaVu Sans','Liberation Sans',sans-serif" font-weight="bold" font-size="11.5" fill="#1010f0" text-anchor="middle">?</text>
</svg>
</div>
<!-- terminal -->
<div id="term" class="abs">
<div class="row w" style="left:376px;top:12px">Create Image Catalog (CRTIMGCLG)</div>
<div class="row b" style="left:31px;top:62px">Type choices<b>,</b> press Enter<b>.</b></div>
<div class="row g" style="left:31px;top:112px">Image catalog  <b>. . . . . . . . .</b> &gt;</div>
<div class="row w" style="left:556px;top:112px">TAAIMAGES</div>
<div class="row g" style="left:766px;top:112px">Name</div>
<div class="row g" style="left:31px;top:137px">Directory  <b>. . . . . . . . . . .</b></div>
<div class="row w" style="left:556px;top:137px">/taaimages</div>
<div class="row g" style="left:31px;top:187px">Image catalog type <b>. . . . . . .</b></div>
<div class="row g" style="left:556px;top:187px"><b class="as">∗</b>OPT</div>
<div class="row g" style="left:766px;top:187px"><b class="as">∗</b>OPT<b>,</b> <b class="as">∗</b>TAP</div>
<div class="row g" style="left:31px;top:212px">Create directory <b>. . . . . . . .</b></div>
<div class="row g" style="left:556px;top:212px"><b class="as">∗</b>YES</div>
<div class="row g" style="left:766px;top:212px"><b class="as">∗</b>YES<b>,</b> <b class="as">∗</b>NO</div>
<div class="row g" style="left:31px;top:237px">Import image catalog <b>. . . . . .</b></div>
<div class="row g" style="left:556px;top:237px"><b class="as">∗</b>NO</div>
<div class="row g" style="left:766px;top:237px"><b class="as">∗</b>NO<b>,</b> <b class="as">∗</b>YES</div>
<div class="row g" style="left:31px;top:262px">Catalog ASP threshold  <b>. . . . .</b></div>
<div class="row g" style="left:556px;top:262px"><b class="as">∗</b>CALC</div>
<div class="row g" style="left:766px;top:262px">1−99<b>,</b> <b class="as">∗</b>CALC<b>,</b> <b class="as">∗</b>MAX</div>
<div class="row g" style="left:31px;top:287px">Add virtual volumes  <b>. . . . . .</b></div>
<div class="row g" style="left:556px;top:287px"><b class="as">∗</b>NONE</div>
<div class="row g" style="left:766px;top:287px">1−256<b>,</b> <b class="as">∗</b>NONE<b>,</b> <b class="as">∗</b>DIR</div>
<div class="row w" style="left:1111px;top:512px">Bottom</div>
<div class="row b" style="left:31px;top:537px">F3=Exit   F4=Prompt   F5=Refresh   F10=Additional parameters   F12=Cancel</div>
<div class="row b" style="left:31px;top:562px">F13=How to use this display        F24=More keys</div>
<div class="abs" style="left:706px;top:160px;width:15px;height:3px;background:#fff"></div>
<div class="abs" style="left:16px;top:613px;width:1200px;height:2px;background:#7890f0"></div>
<div class="row b oia" style="left:16px;top:616px">MA<b class="as">∗</b></div>
<div class="row b oia" style="left:106px;top:616px">A</div>
<div class="row b oia" style="left:391px;top:616px">MW</div>
<div class="row w oia" style="left:1126px;top:616px">06/047</div>
<div class="ul" style="left:556px;top:160px;width:660px;background:#fff"></div>
<div class="ul" style="left:16px;top:185px;width:91px;background:#fff"></div>
<div class="ul" style="left:556px;top:210px;width:61px;background:#00ff00"></div>
<div class="ul" style="left:556px;top:235px;width:61px;background:#00ff00"></div>
<div class="ul" style="left:556px;top:260px;width:61px;background:#00ff00"></div>
<div class="ul" style="left:556px;top:285px;width:91px;background:#00ff00"></div>
<div class="ul" style="left:556px;top:310px;width:91px;background:#00ff00"></div>
</div>
<!-- status bar -->
<div id="status" class="abs">
<div class="sbox" style="left:2px;width:1007px"><div class="abs" style="left:989px;top:0;width:16px;height:16px;background:#fff"></div><svg class="abs" style="left:993px;top:5px" width="8" height="6" viewBox="0 0 8 6"><path d="M0.1 5.2L3.7 0.8L7.3 5.2Z" fill="#000"/></svg></div>
<div class="sbox" style="left:1012px;width:35px"><svg class="abs" style="left:2px;top:2px" width="32" height="12" viewBox="0 0 32 12"><path d="M11.2 1.2H30V3.9H17.5L23 10H1V7H15.5Z" fill="#0000ff"/><path d="M17.5 3.9H30M17.5 3.9L23 10H1" stroke="#000" stroke-width="0.9" fill="none"/></svg></div>
<div class="sbox" style="left:1050px;width:159px"><div class="abs" style="left:1px;top:1px;font-family:'DejaVu Sans','Liberation Sans',sans-serif;font-size:13px;line-height:16px;letter-spacing:-0.31px;will-change:transform;color:#111;-webkit-text-stroke:0.25px #111;white-space:pre">taadev72.taatool.com:23</div></div>
<div class="sbox" style="left:1212px;width:19px"><svg class="abs" style="left:1px;top:0" width="17" height="16" viewBox="0 0 17 16">
<path d="M8.9 7V3.4Q8.9 1.2 11.6 1.2" fill="none" stroke="#fff" stroke-width="1.2"/>
<path d="M13.7 7.4V3.6Q13.7 2.4 12.4 2.3" fill="none" stroke="#fff" stroke-width="1.1"/>
<path d="M9.9 7V3.5Q9.9 1.4 12.3 1.4Q14.8 1.4 14.8 3.5V7.6" fill="none" stroke="#000" stroke-width="1.25"/>
<path d="M1.6 6.6H10.4V13Q10.4 15.4 8 15.4H4Q1.6 15.4 1.6 13Z" fill="#b4b4b4" stroke="#000" stroke-width="1.1"/>
<path d="M2.3 7.5H7.6" stroke="#000" stroke-width="1.3"/>
<path d="M2.4 8.8H7" stroke="#fff" stroke-width="0.9"/>
<path d="M2.6 9.2V13.4" stroke="#e8e8e8" stroke-width="0.8"/>
<path d="M5.5 10.2V13.4" stroke="#000" stroke-width="1.3"/>
</svg></div>
</div>
<div id="deco">
<div class="abs" style="left:0;top:0;width:4px;height:4px;background:radial-gradient(circle at 100% 100%,rgba(0,0,0,0) 3.4px,#1a1a1a 4.4px)"></div>
<div class="abs" style="left:1229px;top:0;width:4px;height:4px;background:radial-gradient(circle at 0 100%,rgba(0,0,0,0) 3.4px,#1a1a1a 4.4px)"></div>
<div class="abs" style="left:0;top:0;width:1233px;height:1px;background:rgba(255,255,255,0.55)"></div>
<div class="abs" style="left:0;top:115px;width:1px;height:653px;background:#2a2a2a"></div>
<div class="abs" style="left:1232px;top:115px;width:1px;height:653px;background:#3a3a3a"></div>
<div class="abs" style="left:1228px;top:786px;width:5px;height:4px;background:radial-gradient(circle at 0 0,rgba(0,0,0,0) 3.2px,#b4b4b4 5px)"></div>
<div class="abs" style="left:0;top:786px;width:4px;height:4px;background:radial-gradient(circle at 100% 0,rgba(0,0,0,0) 3px,#b4b4b4 4.5px)"></div>
</div>
</body>
</html>
